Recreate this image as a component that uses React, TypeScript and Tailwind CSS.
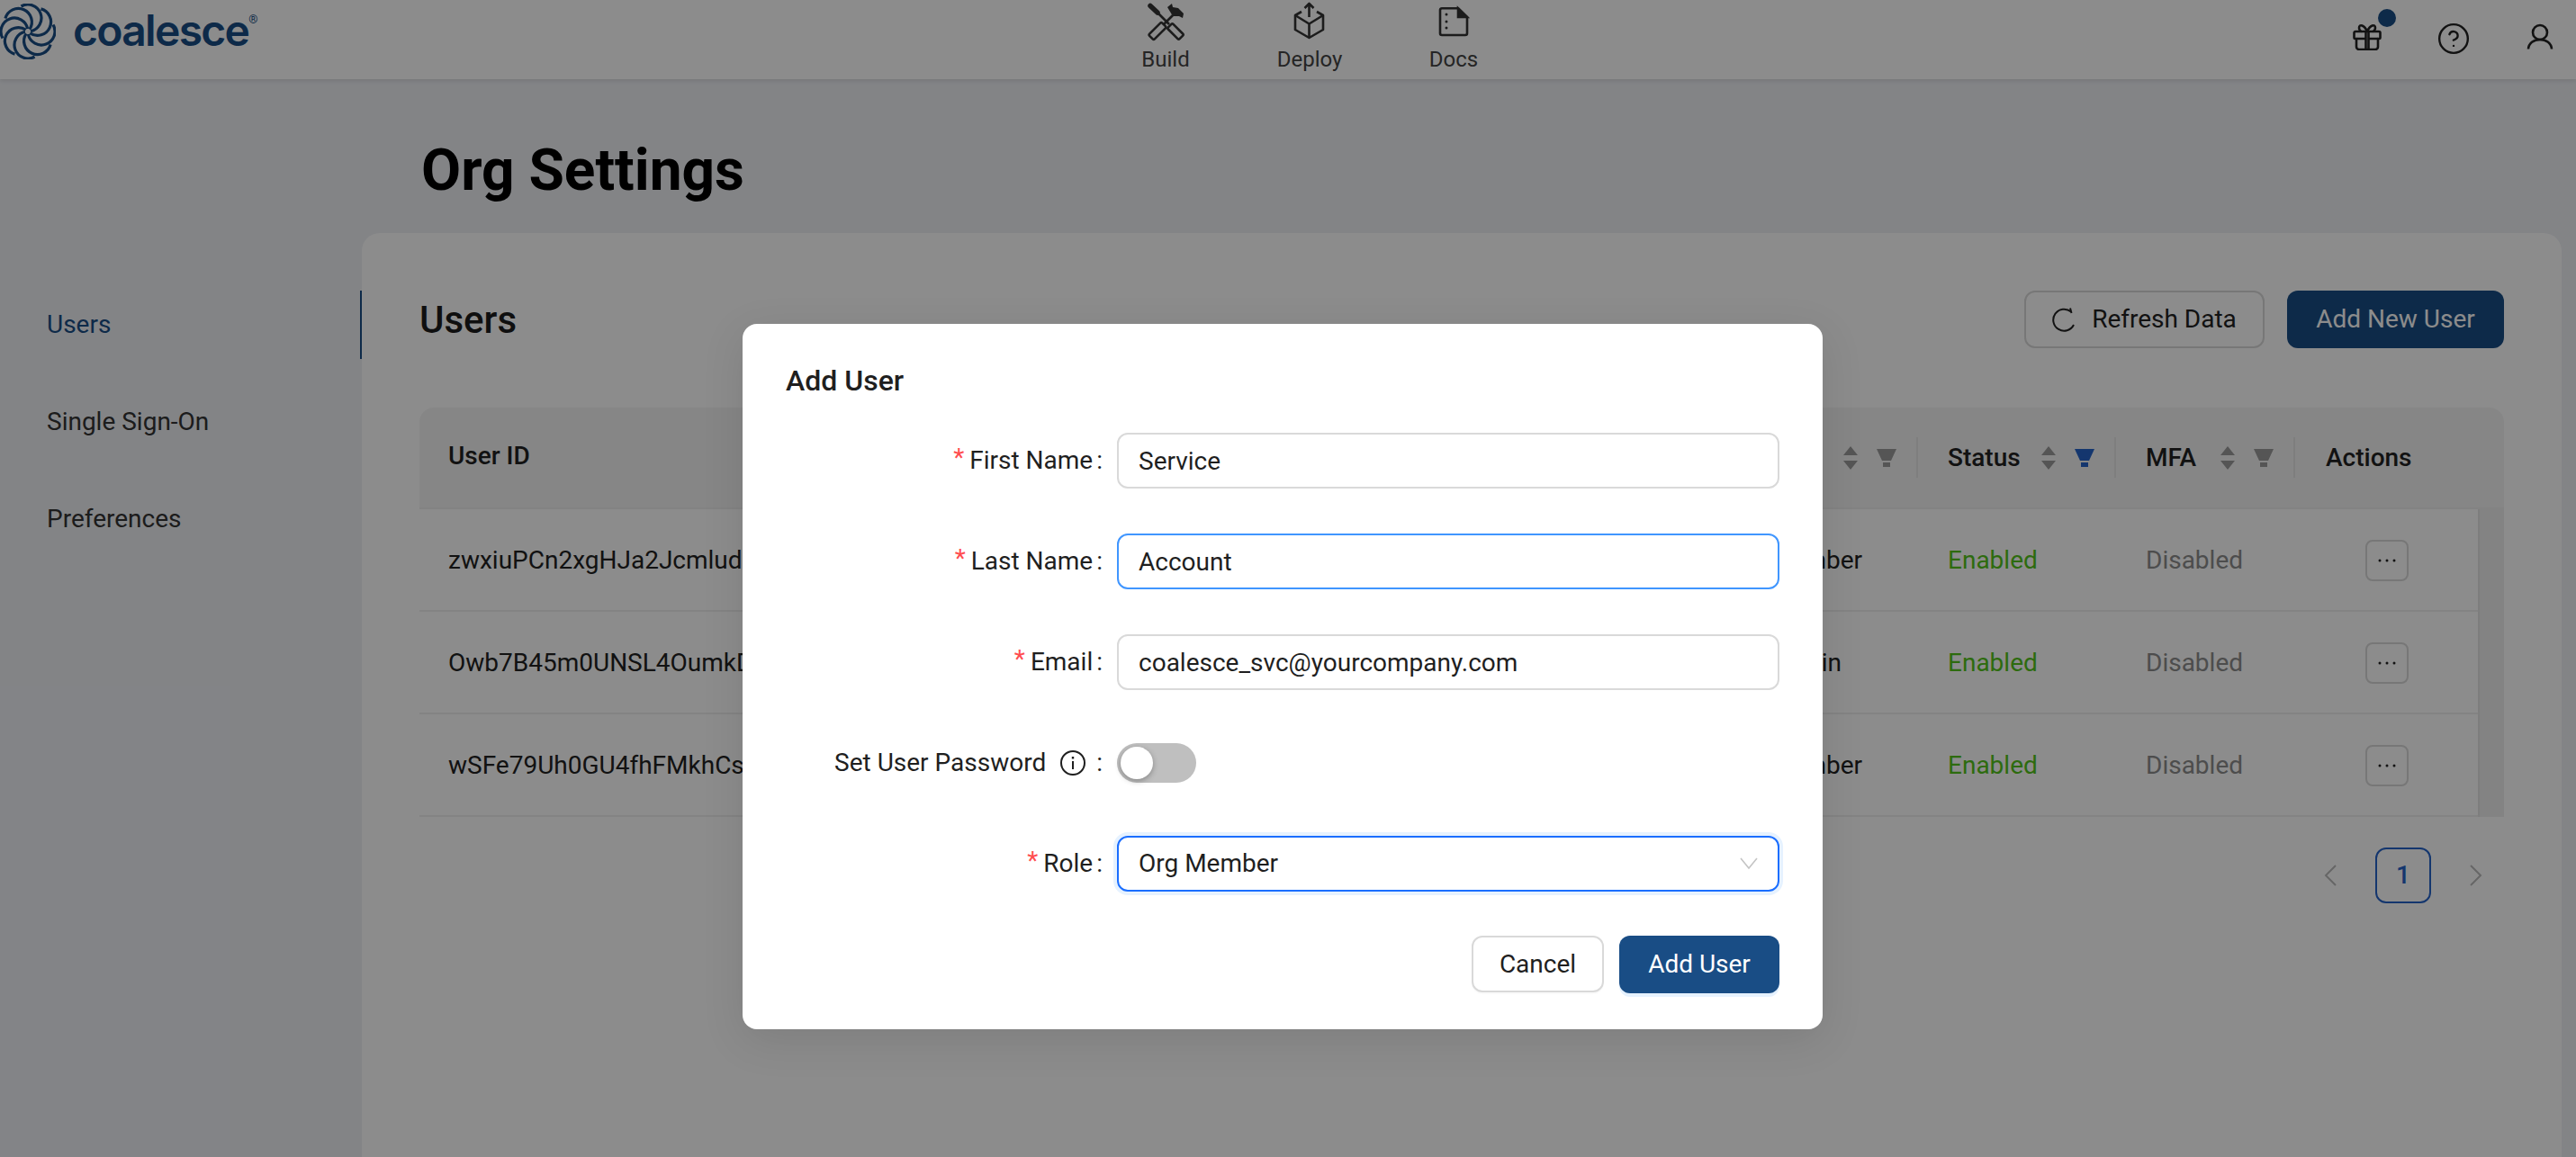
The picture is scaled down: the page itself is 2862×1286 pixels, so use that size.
import React from "react";
import { CircleHelp } from "lucide-react";

const users = [
  { id: "zwxiuPCn2xgHJa2JcmludQ8sT3", role: "Org Member" },
  { id: "Owb7B45m0UNSL4OumkDv2Xe9", role: "Org Admin" },
  { id: "wSFe79Uh0GU4fhFMkhCsK1pL", role: "Org Member" },
];

const headCols = "grid grid-cols-[1424px_241px_220px_199px_231px]";
const bodyCols = "grid grid-cols-[1424px_241px_220px_199px_202px]";

const Logo = () => {
  const angles = [0, 45, 90, 135, 180, 225, 270, 315];
  return (
    <svg width="62" height="62" viewBox="0 0 62 62" fill="none" stroke="#194d85" strokeWidth="3.2">
      {angles.map((a) => (
        <path key={a} d="M34 30.700A15 15 0 1 0 23.500 3" transform={`rotate(${a} 31 31)`} />
      ))}
    </svg>
  );
};

const BuildIcon = () => (
  <svg width="60" height="50" viewBox="-5 0 60 50" fill="none" stroke="#333" strokeWidth="2.6">
    <path d="M8 6.500 16 14" strokeWidth="5.500" strokeLinecap="round" />
    <path d="M16 14 29 27" />
    <rect x="-9" y="-4" width="18" height="8" rx="1.500" transform="translate(36 35) rotate(45)" />
    <rect x="-10" y="-4" width="20" height="8" rx="1.500" transform="translate(16 34.500) rotate(-45)" />
    <path d="M23 27 33 17" />
    <path d="M27 8 32 4 33 8 39 9 45 15 44 20 40 18 33 18 30 13Z" fill="#333" stroke="none" />
  </svg>
);

const DeployIcon = () => (
  <svg width="60" height="50" viewBox="0 0 60 50" fill="none" stroke="#333" strokeWidth="2.6" strokeLinejoin="round">
    <path d="M29.500 19V4M24.500 9l5-5 5 5" />
    <path d="M21 13l-7 4v16l15.500 9L45 33V17l-7-4" />
    <path d="M14 17l15.500 9.500L45 17M29.500 26.500V42" />
  </svg>
);

const DocsIcon = () => (
  <svg width="60" height="50" viewBox="-14 -8 60 50" fill="none" stroke="#333" strokeWidth="2.6">
    <path d="M3 1.300h18L31 11v18a2 2 0 0 1-2 2H3a2 2 0 0 1-2-2V3a2 2 0 0 1 2-1.700z" />
    <path d="M21 1.300 31 11H21z" fill="#333" />
    <circle cx="8" cy="8" r="1.500" fill="#333" stroke="none" />
    <circle cx="8" cy="16" r="1.500" fill="#333" stroke="none" />
    <circle cx="8" cy="23" r="1.500" fill="#333" stroke="none" />
  </svg>
);

const GiftIcon = () => (
  <svg width="32" height="30" viewBox="0 0 32 30" fill="none" stroke="#222" strokeWidth="2.6" strokeLinejoin="round">
    <path d="M3 9h26a1.500 1.500 0 0 1 1.500 1.500V16a1 1 0 0 1-1 1H28v9a3 3 0 0 1-3 3H7a3 3 0 0 1-3-3v-9H2.500a1 1 0 0 1-1-1v-5.500A1.500 1.500 0 0 1 3 9z" />
    <path d="M14.500 9v20M17.500 9v20M4 17h10M18 17h10" />
    <path d="M16 9C13 2 7 0 7 5c0 2 1.500 4 3 4M16 9c3-7 9-9 9-4 0 2-1.500 4-3 4" />
  </svg>
);

const UserIcon = () => (
  <svg width="32" height="32" viewBox="0 0 32 32" fill="none" stroke="#222" strokeWidth="2.6">
    <circle cx="16" cy="11" r="8" />
    <path d="M3 29.500C3.500 23 9 19 16 19s12.500 4 13 10.500" />
  </svg>
);

const SortFilter = ({ active }: { active?: boolean }) => (
  <div className="ml-auto flex items-center gap-[21px]">
    <svg width="16" height="26" viewBox="0 0 16 26" fill="#9b9b9b">
      <path d="M8 0l8 10H0zM8 26l8-10H0z" />
    </svg>
    <svg width="22" height="20" viewBox="0 0 22 20" fill={active ? "#2563c9" : "#9b9b9b"}>
      <path d="M0 0h22l-6 13H6zM7 15h8v5H7z" />
    </svg>
  </div>
);

const Sep = () => <div className="ml-[22px] h-[45px] w-[2px] bg-[#e6e6e6]" />;

const HeadCell = ({ label, active, filter }: { label: string; active?: boolean; filter?: boolean }) => (
  <div className="flex items-center pl-[33px]">
    <span className="font-medium">{label}</span>
    {filter && <SortFilter active={active} />}
    {filter && <Sep />}
  </div>
);

const FormRow = ({ label, required, children }: { label: React.ReactNode; required?: boolean; children: React.ReactNode }) => (
  <div className="flex h-[62px] items-center">
    <div className="flex w-[416px] items-center justify-end">
      {required && <span className="mr-[6px] -mt-[6px] text-[#ff4d4f]">*</span>}
      {label}
      <span className="ml-[4px] mr-[16px]">:</span>
    </div>
    {children}
  </div>
);

const TextField = ({ value, focused }: { value: string; focused?: boolean }) => (
  <input
    readOnly
    value={value}
    className={`h-[62px] w-[736px] rounded-[12px] border-2 bg-white px-[22px] text-[#1f1f1f] outline-none ${
      focused ? "border-[#4096ff]" : "border-[#d9d9d9]"
    }`}
  />
);

export default function App() {
  return (
    <div className="relative h-[1286px] w-[2862px] overflow-hidden bg-[#eef0f5] text-[28px] text-[#222] [font-family:Roboto,sans-serif]">
      <header className="flex h-[88px] bg-white shadow-[0_2px_4px_rgba(0,0,0,0.1)]">
        <div className="flex w-[1215px] items-start pt-[4px]">
          <Logo />
          <span className="ml-[19px] mt-[2px] text-[48px] font-semibold leading-[56px] tracking-[-1.700px] text-[#194d85] [font-family:Inter,sans-serif]">
            coalesce
          </span>
          <span className="mt-[8px] text-[13px] leading-[20px] text-[#194d85]">®</span>
        </div>
        <nav className="flex">
          {[
            { label: "Build", icon: <BuildIcon /> },
            { label: "Deploy", icon: <DeployIcon /> },
            { label: "Docs", icon: <DocsIcon /> },
          ].map((item) => (
            <div key={item.label} className="flex w-[160px] flex-col items-center text-[#444]">
              {item.icon}
              <span className="text-[24px] leading-[32px]">{item.label}</span>
            </div>
          ))}
        </nav>
        <div className="flex flex-1 items-center justify-end gap-[64px] pb-[6px] pr-[24px]">
          <div className="relative">
            <GiftIcon />
            <span className="absolute -right-[16px] -top-[16px] h-[20px] w-[20px] rounded-full bg-[#194d85]" />
          </div>
          <CircleHelp size={38} strokeWidth={1.5} color="#222" className="-mx-[3px] mt-[3px]" />
          <UserIcon />
        </div>
      </header>

      <div className="flex h-[1198px]">
        <aside className="w-[402px] pt-[235px] text-[#333]">
          <div className="flex h-[76px] items-center border-r-2 border-[#194d85] pl-[52px] text-[#194d85]">Users</div>
          <div className="mt-[32px] flex h-[76px] items-center pl-[52px]">Single Sign-On</div>
          <div className="mt-[32px] flex h-[76px] items-center pl-[52px]">Preferences</div>
        </aside>

        <main className="flex flex-1 flex-col pr-[16px]">
          <h1 className="h-[171px] pl-[66px] pt-[62px] text-[64px] font-bold leading-[80px] text-black">Org Settings</h1>
          <section className="flex-1 rounded-t-[20px] bg-white px-[64px] pt-[64px]">
            <div className="flex h-[64px] items-center">
              <h2 className="text-[42px] font-medium text-[#1c1c1c]">Users</h2>
              <button className="ml-auto flex h-[64px] w-[267px] items-center justify-center gap-[16px] rounded-[12px] border-2 border-[#d9d9d9] bg-white">
                <svg width="28" height="28" viewBox="0 0 28 28" fill="none" stroke="#222" strokeWidth="2">
                  <path d="M21 5.500A12 12 0 1 0 24 20" />
                  <path d="M20 1.500l1.500 5.500" />
                </svg>
                Refresh Data
              </button>
              <button className="ml-[25px] h-[64px] w-[241px] rounded-[12px] bg-[#194d85] text-white">Add New User</button>
            </div>

            <div className="mt-[66px]">
              <div className={`${headCols} h-[113px] rounded-t-[16px] border-b-2 border-[#eeeeee] bg-[#f5f5f5]`}>
                <div className="flex items-center pl-[32px]">
                  <span className="-mt-[4px] font-medium">User ID</span>
                </div>
                <HeadCell label="Role" filter />
                <HeadCell label="Status" filter active />
                <HeadCell label="MFA" filter />
                <div className="flex items-center pl-[34px]">
                  <span className="font-medium">Actions</span>
                </div>
              </div>
              <div className="flex">
                <div className="flex-1">
                  {users.map((u) => (
                    <div key={u.id} className={`${bodyCols} h-[114px] items-center border-b-2 border-[#eeeeee] pt-[2px]`}>
                      <div className="pl-[32px]">{u.id}</div>
                      <div className="pl-[24px]">{u.role}</div>
                      <div className="pl-[33px] text-[#52c41a]">Enabled</div>
                      <div className="pl-[33px] text-[#8c8c8c]">Disabled</div>
                      <div className="pl-[78px]">
                        <div className="flex h-[46px] w-[48px] items-center justify-center rounded-[8px] border-2 border-[#d9d9d9]">
                          <svg width="20" height="4" viewBox="0 0 20 4" fill="#222">
                            <circle cx="2" cy="2" r="1.500" />
                            <circle cx="10" cy="2" r="1.500" />
                            <circle cx="18" cy="2" r="1.500" />
                          </svg>
                        </div>
                      </div>
                    </div>
                  ))}
                </div>
                <div className="w-[29px] border-l-2 border-[#e6e6e6] bg-[#efefef]" />
              </div>
            </div>

            <div className="mt-[34px] flex items-center justify-end gap-[43px] pr-[24px]">
              <svg width="14" height="24" viewBox="0 0 14 24" fill="none" stroke="#bbb" strokeWidth="2">
                <path d="M13 1 2 12l11 11" />
              </svg>
              <div className="flex h-[62px] w-[62px] items-center justify-center rounded-[12px] border-2 border-[#2563c9] font-medium text-[#2563c9]">
                1
              </div>
              <svg width="14" height="24" viewBox="0 0 14 24" fill="none" stroke="#bbb" strokeWidth="2">
                <path d="m1 1 11 11L1 23" />
              </svg>
            </div>
          </section>
        </main>
      </div>

      {/* modal mask and dialog */}
      <div className="absolute inset-0 bg-black/45">
        <div className="absolute left-[825px] top-[360px] h-[784px] w-[1200px] rounded-[16px] bg-white text-[#1f1f1f] shadow-[0_12px_48px_rgba(0,0,0,0.1)]">
          <h3 className="h-[121px] pl-[48px] pt-[44px] text-[32px] font-medium leading-[38px]">Add User</h3>
          <div className="flex flex-col gap-[50px]">
            <FormRow label="First Name" required>
              <TextField value="Service" />
            </FormRow>
            <FormRow label="Last Name" required>
              <TextField value="Account" focused />
            </FormRow>
            <FormRow label="Email" required>
              <TextField value="coalesce_svc@yourcompany.com" />
            </FormRow>
            <FormRow
              label={
                <span className="flex items-center">
                  Set User Password
                  <svg width="28" height="28" viewBox="0 0 28 28" fill="none" stroke="#1f1f1f" strokeWidth="2" className="ml-[16px] mr-[8px]">
                    <circle cx="14" cy="14" r="13" />
                    <path d="M14 12v9" />
                    <path d="M14 7v2.500" strokeWidth="2.400" />
                  </svg>
                </span>
              }
            >
              <div className="flex h-[44px] w-[88px] items-center rounded-full bg-[#bfbfbf] pl-[4px]">
                <div className="h-[36px] w-[36px] rounded-full bg-white shadow-[0_2px_6px_rgba(0,0,0,0.3)]" />
              </div>
            </FormRow>
            <FormRow label="Role" required>
              <div className="flex h-[62px] w-[736px] items-center justify-between rounded-[12px] border-2 border-[#1a6eff] pl-[22px] pr-[22px] shadow-[0_0_0_4px_#e6f2ff]">
                Org Member
                <svg width="20" height="14" viewBox="0 0 20 14" fill="none" stroke="#c4c4c4" strokeWidth="1.600">
                  <path d="m1 1 9 11 9-11" />
                </svg>
              </div>
            </FormRow>
          </div>
          <div className="mt-[49px] flex justify-end gap-[17px] pr-[48px]">
            <button className="h-[63px] w-[147px] rounded-[12px] border-2 border-[#d9d9d9] bg-white shadow-[0_2px_0_rgba(0,0,0,0.02)]">Cancel</button>
            <button className="h-[64px] w-[178px] rounded-[12px] bg-[#194d85] text-white shadow-[0_4px_0_#e6f2ff]">Add User</button>
          </div>
        </div>
      </div>
    </div>
  );
}
